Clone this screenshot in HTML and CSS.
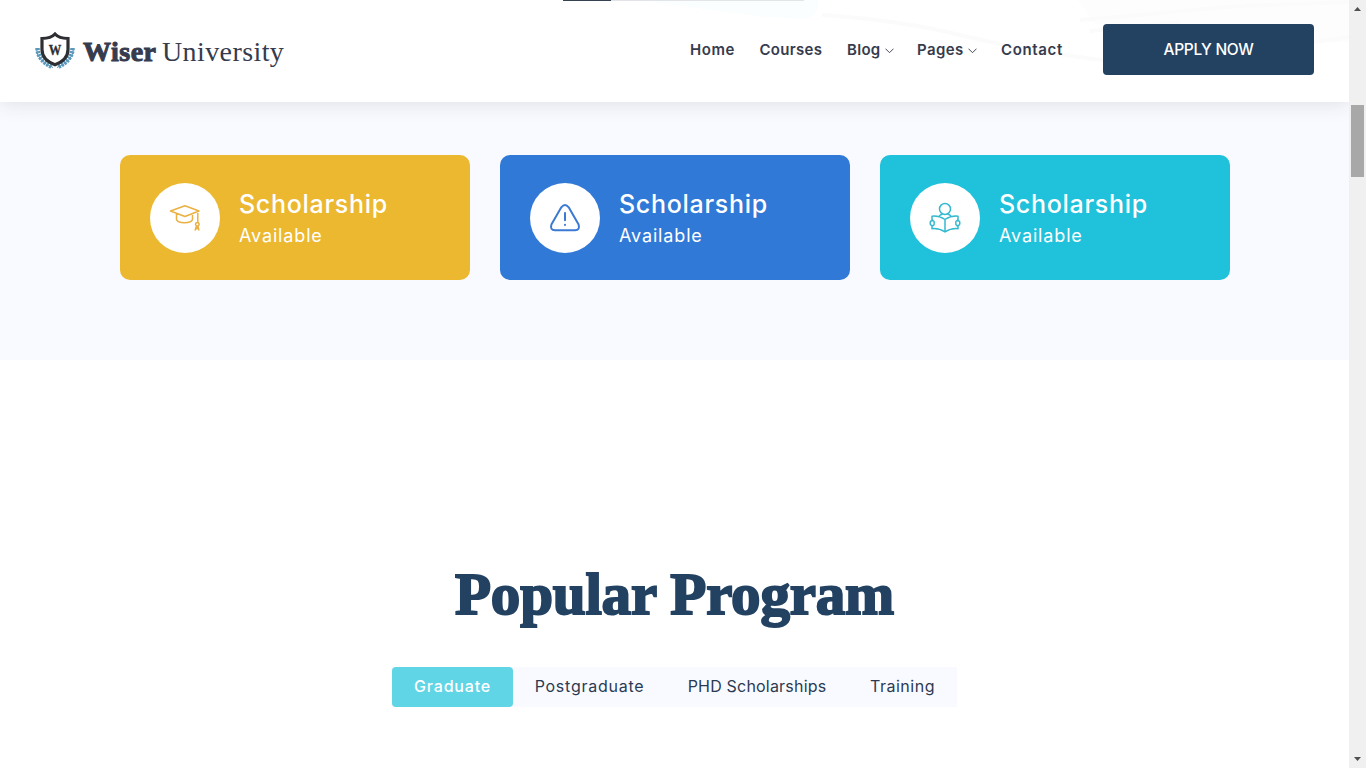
FILE: index.html
```html
<!DOCTYPE html>
<html lang="en">
<head>
<meta charset="utf-8">
<title>Wiser University</title>
<link rel="stylesheet" href="styles.css">
</head>
<body>
<div class="page">
  <header class="header">
    <svg class="header-photo" width="1349" height="102" viewBox="0 0 1349 102" aria-hidden="true">
      <path class="tint" d="M640 0L818 0C819 10 816 18 802 19L755 16Z"/>
      <path class="paper" d="M1078 0H1349V42L1315 42V24H1095Z"/>
      <path class="crease" d="M822 15Q900 20 960 35T1110 61M1080 20L1240 6L1349 2M1090 31L1180 22M1314 42L1349 37"/>
    </svg>
    <div class="progress"><div class="progress-fill"></div></div>
    <a class="brand">
      <svg class="crest" width="42" height="40" viewBox="0 0 42 40">
        <g class="laurel">
          <path d="M2.500 18Q2.500 31 19 37.500"/>
          <path d="M39.500 18Q39.500 31 23 37.500"/>
        </g>
        <g class="leaves">
          <path d="M3.500 18Q3.500 30 18 37"/>
          <path d="M38.500 18Q38.500 30 24 37"/>
        </g>
        <path class="shield" d="M21 4Q25 8.300 34 8.500V19.500C34 27 29.500 31.600 21 34.700C12.500 31.600 8 27 8 19.500V8.500Q17 8.300 21 4Z"/>
        <text class="crest-letter" x="21" y="24.500" text-anchor="middle" textLength="12.500" lengthAdjust="spacingAndGlyphs">W</text>
      </svg>
      <span class="brand-name"><b class="brand-bold">Wiser</b><span class="brand-light">University</span></span>
    </a>
    <nav class="nav">
      <a class="nav-home">Home</a>
      <a class="nav-courses">Courses</a>
      <a class="nav-blog">Blog<svg class="chevron" width="9" height="6" viewBox="0 0 9 6"><path d="M.5 .7L4.500 4.700L8.500 .7"/></svg></a>
      <a class="nav-pages">Pages<svg class="chevron" width="9" height="6" viewBox="0 0 9 6"><path d="M.5 .7L4.500 4.700L8.500 .7"/></svg></a>
      <a class="nav-contact">Contact</a>
    </nav>
    <a class="apply"><span>APPLY NOW</span></a>
  </header>
  <section class="cards">
    <article class="card gold">
      <div class="badge">
        <svg width="32" height="32" viewBox="0 0 32 32"><path d="M1.500 9L16 3.800L30 9L16 14.500ZM7.500 11.500V17.500C9 21.800 22 21.800 23.500 17.500V11.500M28.800 9.500V20.500M28.300 20.500A1.800 1.800 0 1 0 28.400 20.500M27.500 24L26 28.500M28.800 24L30 28.500M26.500 27.500L28.200 25.500L29.600 27.500"/></svg>
      </div>
      <div class="card-text"><h3><span>Scholarship</span></h3><p><span>Available</span></p></div>
    </article>
    <article class="card blue">
      <div class="badge">
        <svg class="alert" width="32" height="32" viewBox="0 0 32 32"><path d="M12.300 5.300Q16 .8 19.700 5.300L29.600 22.500Q31.200 28 26 28.300H6Q.8 28 2.400 22.500ZM16 11V18.300M16 22.700V23"/></svg>
      </div>
      <div class="card-text"><h3><span>Scholarship</span></h3><p><span>Available</span></p></div>
    </article>
    <article class="card cyan">
      <div class="badge">
        <svg width="32" height="32" viewBox="0 0 32 32"><circle cx="16" cy="7" r="5.500"/><path d="M3 18.500V14.200Q10 13.500 16 17.500Q22 13.500 29 14.200V18.500M3 23.500V26.700Q10 26 16 30Q22 26 29 26.700V23.500M16 17.500V30M10 14.200Q11.500 12.500 13.500 12.200M18.500 12.200Q21 12.500 22 14.200M4 18.500Q1 18.500 1.200 21Q1 23.700 4 23.700Q5.500 23 5.200 21Q5.500 19 4 18.500M28 18.500Q31 18.500 30.800 21Q31 23.700 28 23.700Q26.500 23 26.800 21Q26.500 19 28 18.500"/></svg>
      </div>
      <div class="card-text"><h3><span>Scholarship</span></h3><p><span>Available</span></p></div>
    </article>
  </section>
  <section class="programs">
    <h2 class="title"><span>Popular Program</span></h2>
    <div class="tabs">
      <a class="tab active"><span>Graduate</span></a>
      <a class="tab post"><span>Postgraduate</span></a>
      <a class="tab phd"><span>PHD Scholarships</span></a>
      <a class="tab train"><span>Training</span></a>
    </div>
  </section>
</div>
<aside class="scrollbar">
  <svg width="7" height="4" viewBox="0 0 7 4"><path d="M0 4L3.500 0L7 4Z"/></svg>
  <div class="thumb"></div>
  <svg class="down" width="7" height="4" viewBox="0 0 7 4"><path d="M0 0L3.500 4L7 0Z"/></svg>
</aside>
</body>
</html>
```
FILE: styles.css
```css
* { box-sizing: border-box; }
body { margin: 0; display: flex; height: 768px; overflow: hidden; background: #fff; font-family: Inter, "Open Sans", sans-serif; color: #363b4d; }
h2, h3, p { margin: 0; }
span { white-space: nowrap; }
.page { width: 1349px; flex: none; overflow: hidden; }

.header { position: relative; z-index: 1; display: flex; align-items: flex-start; height: 102px; background: #fff; box-shadow: 0 0 20px rgba(40, 48, 65, .15); }
.header-photo { position: absolute; left: 0; top: 0; }
.tint { fill: #fafeff; }
.paper { fill: #fdfdfd; }
.crease { fill: none; stroke: #fbfbfb; stroke-width: 4; }
.progress { position: absolute; left: 563px; top: 0; width: 241px; height: 1px; background: #e3e4e7; }
.progress-fill { width: 48px; height: 1px; background: #344252; }
.brand { position: relative; display: flex; margin: 30px 0 0 34px; width: 656px; }
.crest { flex: none; }
.laurel path { fill: none; stroke: #4f8eb2; stroke-width: 1; }
.leaves path { fill: none; stroke: #5b99bc; stroke-width: 4.5; stroke-dasharray: 2.2 1; }
.shield { fill: #fff; stroke: #2e2f32; stroke-width: 3.2; }
.crest-letter { font: bold 14px "Liberation Serif", serif; fill: #2e2f32; stroke: #2e2f32; stroke-width: .3; }
.brand-name { display: flex; font: 28px/40px "Liberation Serif", serif; padding: 2px 0 0 7px; }
.brand-bold { width: 79px; letter-spacing: .5px; -webkit-text-stroke: 1px #363b4d; }
.brand-light { letter-spacing: .4px; }

.nav { position: relative; display: flex; font-size: 15px; line-height: 24px; font-weight: 600; padding-top: 38px; width: 413px; }
.nav a { display: flex; white-space: nowrap; }
.nav-home { width: 69.5px; letter-spacing: .6px; }
.nav-courses { width: 87.5px; letter-spacing: .3px; }
.nav-blog { width: 70px; letter-spacing: .3px; }
.nav-pages { width: 84px; letter-spacing: .4px; }
.nav-contact { letter-spacing: .65px; }
.chevron { margin: 10px 0 0 4px; fill: none; stroke: #454a5b; stroke-width: 1; }
.apply { position: relative; display: flex; align-items: center; justify-content: center; width: 211px; height: 51px; margin-top: 24px; background: #234262; border-radius: 4px; color: #fff; font-size: 15.5px; font-weight: 500; letter-spacing: -.3px; }

.cards { display: flex; gap: 30px; height: 258px; padding: 53px 0 0 120px; background: #f9faff; }
.card { display: flex; width: 350px; height: 125px; padding: 28px 30px; border-radius: 10px; color: #fff; }
.gold { background: #ebb830; stroke: #ebb042; }
.blue { background: #3179d7; stroke: #3b79d3; }
.cyan { background: #20c1da; stroke: #34b9cf; }
.badge { display: flex; align-items: center; justify-content: center; width: 70px; height: 70px; border-radius: 50%; background: #fff; }
.badge svg { fill: none; stroke-width: 1.5; stroke-linejoin: round; }
.badge .alert { stroke-width: 2; stroke-linecap: round; }
.card-text { margin-left: 19px; }
.card h3 { font-size: 25px; line-height: 34px; font-weight: 500; padding-top: 4px; letter-spacing: .7px; }
.card p { font-size: 18px; line-height: 28px; font-weight: 400; padding-top: 1px; letter-spacing: .85px; }

.programs { display: flex; flex-direction: column; align-items: center; padding-top: 194px; }
.title { color: #234262; font: bold 59px/80px "Liberation Serif", serif; -webkit-text-stroke: 2px #234262; letter-spacing: -.2px; }
.tabs { display: flex; height: 40px; margin-top: 33px; background: #f9faff; color: #2b3a52; font-size: 16px; line-height: 38px; }
.tab { text-align: center; }
.active { width: 121px; background: #60d5e6; color: #fff; border-radius: 4px; font-weight: 500; letter-spacing: .8px; }
.post { width: 153px; letter-spacing: .75px; }
.phd { width: 182px; letter-spacing: .2px; }
.train { width: 109px; letter-spacing: .5px; }

.scrollbar { display: flex; flex-direction: column; align-items: center; width: 17px; padding: 7px 0; background: #f0f0f0; }
.scrollbar svg { fill: #505050; }
.thumb { width: 13px; height: 72px; margin-top: 94px; background: #a8a8a8; }
.down { margin-top: auto; }
```
